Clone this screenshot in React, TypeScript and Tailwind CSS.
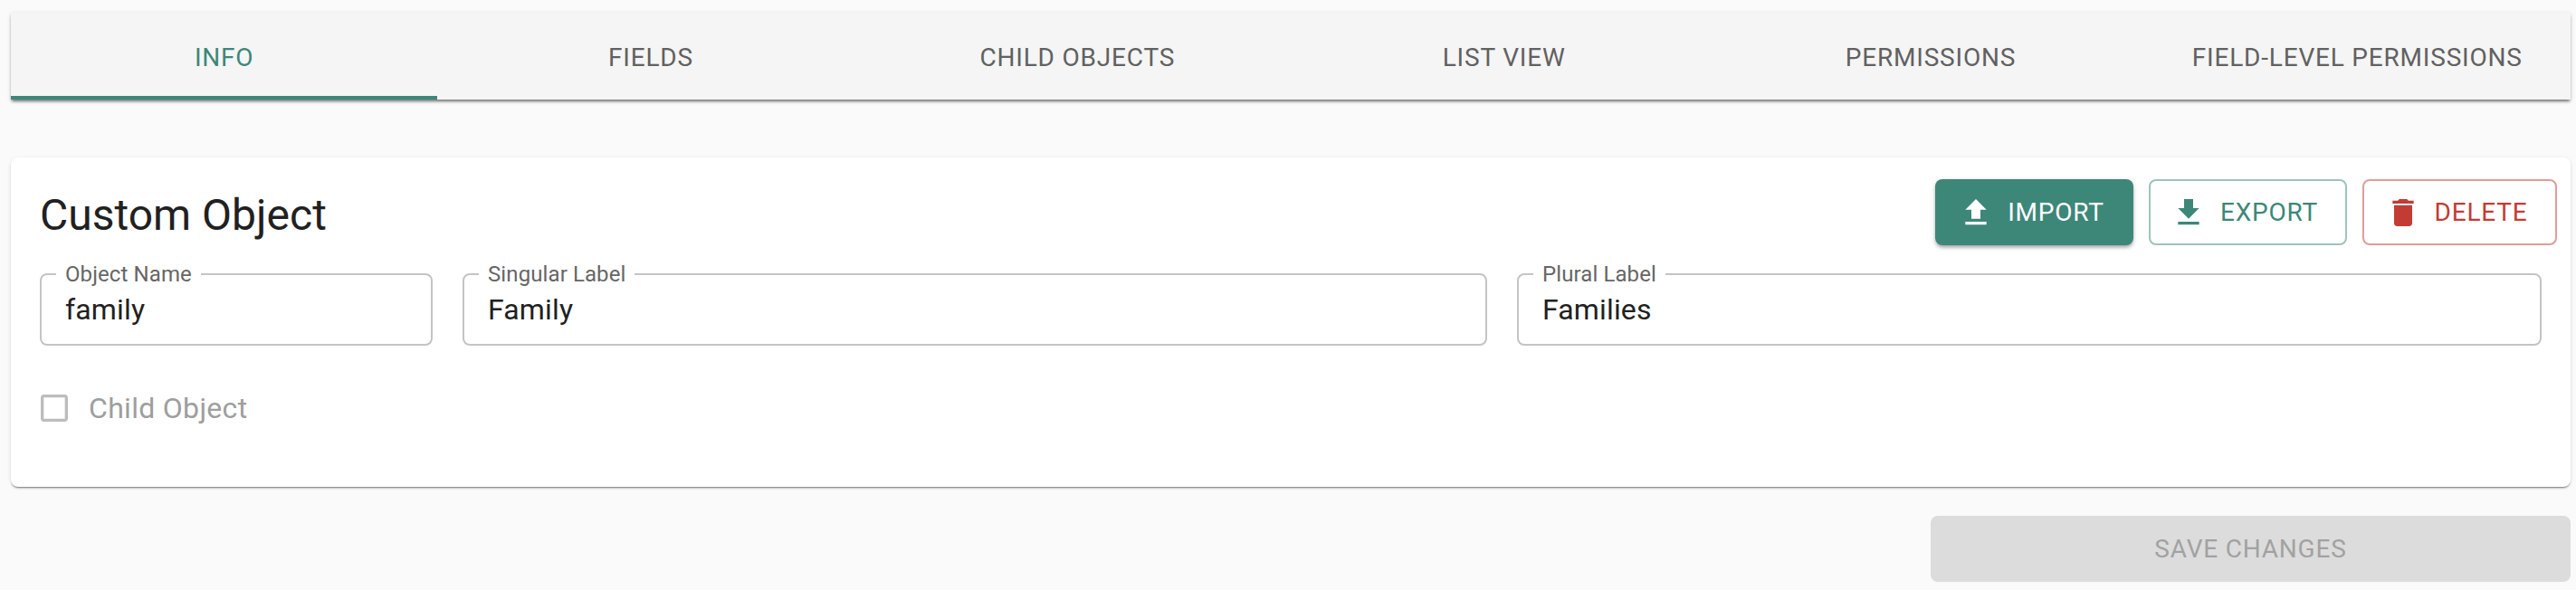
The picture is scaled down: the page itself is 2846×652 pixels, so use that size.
const TABS = ["INFO", "FIELDS", "CHILD OBJECTS", "LIST VIEW", "PERMISSIONS", "FIELD-LEVEL PERMISSIONS"];

function Field({ label, value, className }: { label: string; value: string; className: string }) {
  return (
    <fieldset className={`h-[91px] rounded-[8px] border-2 border-[#c4c4c4] ${className}`}>
      <legend className="ml-[16px] px-[10px] text-[24px] leading-[24px] tracking-[0.1px] text-[#666666]">{label}</legend>
      <div className="mt-[7px] pl-[26px] text-[32px] leading-[40px] tracking-[0.15px] text-[#212121]">{value}</div>
    </fieldset>
  );
}

export default function App() {
  return (
    <div className="h-[652px] w-full overflow-hidden bg-[#fafafa] pl-[12px] pr-[6px] pt-[14px] font-['Roboto',sans-serif]">
      <div className="flex h-[96px] bg-[#f5f5f5] shadow-[0_3px_3px_-1px_rgba(0,0,0,0.5),0_1px_5px_rgba(0,0,0,0.12)]">
        {TABS.map((t, i) => (
          <div
            key={t}
            className={`flex flex-1 items-center justify-center text-[28px] tracking-[0.8px] ${
              i === 0 ? "border-b-4 border-[#3d8779] pt-[7px] text-[#3d8779]" : "pt-[3px] text-[#616161]"
            }`}
          >
            {t}
          </div>
        ))}
      </div>

      <div className="mt-[64px] h-[364px] rounded-[8px] bg-white px-[32px] pt-[24px] shadow-[0_2px_2px_-1px_rgba(0,0,0,0.5),0_1px_4px_rgba(0,0,0,0.1)]">
        <div className="flex items-start justify-between">
          <h1 className="mt-[12px] text-[48px] leading-[56px] text-[#212121]">Custom Object</h1>
          <div className="-mr-[17px] flex gap-[17px]">
            <button className="flex h-[73px] w-[219px] items-center justify-center gap-[15px] rounded-[8px] bg-[#3d8779] pr-[7px] text-[28px] tracking-[0.8px] text-white shadow-[0_3px_4px_-1px_rgba(0,0,0,0.35),0_1px_6px_rgba(0,0,0,0.12)]">
              <svg viewBox="0 0 24 24" className="h-[40px] w-[40px] fill-current">
                <path d="M9 16h6v-6h4l-7-7-7 7h4zm-4 2h14v2H5z" />
              </svg>
              IMPORT
            </button>
            <button className="flex h-[73px] w-[219px] items-center justify-center gap-[15px] rounded-[8px] border-2 border-[#9ec3bc] pr-[8px] text-[28px] tracking-[0.8px] text-[#3d8779]">
              <svg viewBox="0 0 24 24" className="h-[40px] w-[40px] fill-current">
                <path d="M19 9h-4V3H9v6H5l7 7 7-7zM5 18v2h14v-2H5z" />
              </svg>
              EXPORT
            </button>
            <button className="flex h-[73px] w-[215px] items-center justify-center gap-[15px] rounded-[8px] border-2 border-[#e09d9a] pr-[8px] text-[28px] tracking-[0.8px] text-[#c23c35]">
              <svg viewBox="0 0 24 24" className="h-[40px] w-[40px] fill-current">
                <path d="M6 19c0 1.1.9 2 2 2h8c1.1 0 2-.9 2-2V7H6v12zM19 4h-3.5l-1-1h-5l-1 1H5v2h14V4z" />
              </svg>
              DELETE
            </button>
          </div>
        </div>

        <div className="mt-[20px] flex gap-[33px]">
          <Field label="Object Name" value="family" className="w-[434px] shrink-0" />
          <Field label="Singular Label" value="Family" className="flex-1" />
          <Field label="Plural Label" value="Families" className="flex-1" />
        </div>

        <div className="mt-[49px] flex items-center gap-[18px] text-[32px] leading-[40px] tracking-[0.3px] text-[#9e9e9e]">
          <svg viewBox="0 0 24 24" className="-ml-[4px] h-[40px] w-[40px] fill-[#bdbdbd]">
            <path d="M19 5v14H5V5h14m0-2H5c-1.1 0-2 .9-2 2v14c0 1.1.9 2 2 2h14c1.1 0 2-.9 2-2V5c0-1.1-.9-2-2-2z" />
          </svg>
          Child Object
        </div>
      </div>

      <div className="mt-[32px] flex justify-end">
        <button className="h-[73px] w-[707px] rounded-[8px] bg-[#dcdcdc] text-[28px] tracking-[0.8px] text-[#a2a2a2]">
          SAVE CHANGES
        </button>
      </div>
    </div>
  );
}
